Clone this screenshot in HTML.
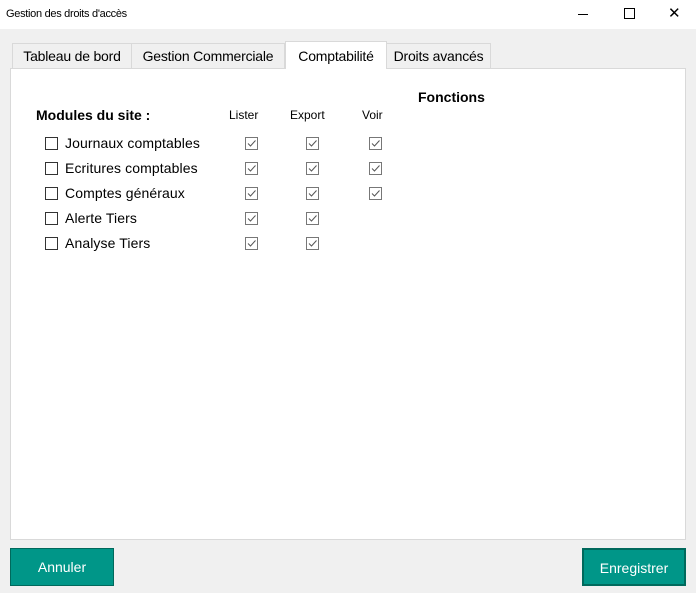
<!DOCTYPE html>
<html><head><style>
body{margin:0;width:696px;height:593px;background:#f0f0f0;font-family:"Liberation Sans",sans-serif;position:relative;overflow:hidden;color:#000}
.a{position:absolute}
.title{left:0;top:0;width:696px;height:29px;background:#fff}
.tab{position:absolute;top:43px;height:25px;border:1px solid #d9d9d9;border-bottom:none;background:#f0f0f0;font-size:14px;line-height:25px;text-align:center;box-sizing:border-box;letter-spacing:-0.2px}
.panel{left:10px;top:68px;width:676px;height:472px;background:#fff;border:1px solid #d9d9d9;box-sizing:border-box}
.cb{position:absolute;width:11px;height:11px;border:1px solid #333;background:#fff}
.ck{position:absolute;width:11px;height:11px;border:1px solid #777;background:#fff}
.ck svg{position:absolute;left:0;top:0}
.lbl{position:absolute;font-size:14px;left:65px;letter-spacing:0.1px}
.btn{position:absolute;top:548px;width:104px;height:38px;background:#009688;border:1px solid #00695c;box-sizing:border-box;color:#fff;font-size:14px;text-align:center;line-height:36px}
</style></head><body>
<div class="a title"></div>
<div class="a" style="left:6px;top:8px;font-size:11px;letter-spacing:-0.3px">Gestion des droits d'accès</div>
<div class="a" style="left:578px;top:14px;width:10px;height:1px;background:#000"></div>
<div class="a" style="left:624px;top:8px;width:9px;height:9px;border:1px solid #000"></div>
<div class="a" style="left:668px;top:4px;font-size:15px;font-weight:300">✕</div>
<div class="a panel"></div>
<div class="tab" style="left:12px;width:120px">Tableau de bord</div>
<div class="tab" style="left:131px;width:154px">Gestion Commerciale</div>
<div class="tab" style="left:285px;top:41px;height:28px;width:102px;background:#fff;line-height:28px;z-index:2">Comptabilité</div>
<div class="tab" style="left:386px;width:105px">Droits avancés</div>
<div class="a" style="left:418px;top:89px;font-size:14px;font-weight:bold">Fonctions</div>
<div class="a" style="left:36px;top:107px;font-size:14px;font-weight:bold">Modules du site :</div>
<div class="a" style="left:229px;top:108px;font-size:12px">Lister</div>
<div class="a" style="left:290px;top:108px;font-size:12px">Export</div>
<div class="a" style="left:362px;top:108px;font-size:12px">Voir</div>
<div id="rows"></div>
<script>
var names=["Journaux comptables","Ecritures comptables","Comptes généraux","Alerte Tiers","Analyse Tiers"];
var h="";
var s='<svg width="11" height="11"><path d="M2 5.5L4.5 8L9.5 2.5" fill="none" stroke="#555" stroke-width="1"/></svg>';
names.forEach(function(n,i){var y=137+25*i;
h+='<div class="cb" style="left:45px;top:'+y+'px"></div><div class="lbl" style="top:'+(y-2)+'px">'+n+'</div>';
h+='<div class="ck" style="left:245px;top:'+y+'px">'+s+'</div><div class="ck" style="left:306px;top:'+y+'px">'+s+'</div>';
if(i<3)h+='<div class="ck" style="left:369px;top:'+y+'px">'+s+'</div>';});
document.getElementById("rows").innerHTML=h;
</script>
<div class="btn" style="left:10px">Annuler</div>
<div class="btn" style="left:582px;border-width:2px">Enregistrer</div>
</body></html>
